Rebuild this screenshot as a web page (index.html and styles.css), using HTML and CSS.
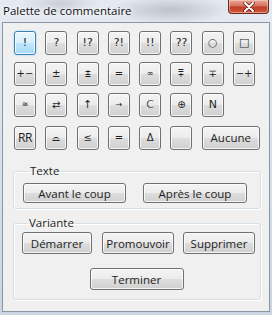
FILE: index.html
```html
<!DOCTYPE html>
<html lang="fr">
<head>
    <meta charset="UTF-8">
    <title>Palette de commentaire</title>
    <link rel="stylesheet" href="styles.css">
</head>
<body>
    <div class="window">
        <div class="titlebar">
            <span class="title">Palette de commentaire</span>
            <div class="close">
                <svg width="14" height="10" viewBox="0 0 14 10">
                    <path d="M3 1 L11 9 M11 1 L3 9" stroke="#5a1a10" stroke-width="3.4" stroke-linecap="round"/>
                    <path d="M3 1 L11 9 M11 1 L3 9" stroke="#ffffff" stroke-width="2" stroke-linecap="round"/>
                </svg>
            </div>
        </div>

        <div class="client">
            <div class="symbols">
                <button class="sym focused">!</button>
                <button class="sym">?</button>
                <button class="sym">!?</button>
                <button class="sym">?!</button>
                <button class="sym">!!</button>
                <button class="sym">??</button>
                <button class="sym light">○</button>
                <button class="sym">□</button>

                <button class="sym small">+−</button>
                <button class="sym small">±</button>
                <button class="sym small">⩲</button>
                <button class="sym small">=</button>
                <button class="sym tiny">∞</button>
                <button class="sym small">⩱</button>
                <button class="sym small">∓</button>
                <button class="sym small">−+</button>

                <button class="sym tiny">≅</button>
                <button class="sym small">⇄</button>
                <button class="sym">↑</button>
                <button class="sym tiny">→</button>
                <button class="sym light">C</button>
                <button class="sym small">⊕</button>
                <button class="sym">N</button>

                <button class="sym last rr">RR</button>
                <button class="sym last small">⌓</button>
                <button class="sym last small">≤</button>
                <button class="sym last small">=</button>
                <button class="sym last small">Δ</button>
                <button class="sym last"></button>
                <button class="sym last wide">Aucune</button>
            </div>

            <fieldset class="group">
                <legend>Texte</legend>
                <div class="row texte">
                    <button class="btn avant">Avant le coup</button>
                    <button class="btn apres">Après le coup</button>
                </div>
            </fieldset>

            <fieldset class="group variante">
                <legend>Variante</legend>
                <div class="row">
                    <button class="btn demarrer">Démarrer</button>
                    <button class="btn promouvoir">Promouvoir</button>
                    <button class="btn supprimer">Supprimer</button>
                </div>
                <div class="row center">
                    <button class="btn terminer">Terminer</button>
                </div>
            </fieldset>
        </div>
    </div>
</body>
</html>
```

FILE: styles.css
```css
html, body {
    margin: 0;
    padding: 0;
}
body {
    width: 272px;
    height: 315px;
    overflow: hidden;
    font-family: "Open Sans", "DejaVu Sans", sans-serif;
    font-size: 11.5px;
    color: #1e1e1e;
}
.window {
    width: 272px;
    height: 315px;
    box-sizing: border-box;
    padding: 0 2px 3px 2px;
    background:
        radial-gradient(ellipse 60px 14px at 170px 10px, rgba(120,120,130,0.35), transparent),
        radial-gradient(ellipse 40px 12px at 60px 4px, rgba(150,140,150,0.3), transparent),
        linear-gradient(#e4eaf1, #d6dfe8 60%, #cad5e0);
}
.titlebar {
    height: 22px;
    display: flex;
    justify-content: space-between;
    align-items: flex-start;
}
.title {
    margin: 3px 0 0 1px;
    font-size: 11.5px;
    color: #111;
    text-shadow: 0 0 6px #fff, 0 0 3px #fff;
}
.close {
    width: 41px;
    height: 14px;
    margin-right: 1px;
    box-sizing: border-box;
    border: 1px solid #6b2a1f;
    border-top: none;
    border-radius: 0 0 4px 4px;
    background: linear-gradient(#e9a899, #d4735c 45%, #c13f26 55%, #d2583c);
    box-shadow: inset 0 0 0 1px rgba(255,220,210,0.5);
    display: flex;
    align-items: center;
    justify-content: center;
}
.client {
    height: 290px;
    box-sizing: border-box;
    border: 1px solid #8c96a0;
    background: #f0f0f0;
    padding: 8px 9px 0 10px;
}
.symbols {
    display: grid;
    grid-template-columns: repeat(8, 22px);
    column-gap: 9.3px;
    row-gap: 7px;
    margin-left: 1px;
}
button {
    font-family: "Open Sans", "DejaVu Sans", sans-serif;
    font-size: 11.5px;
    color: #1e1e1e;
    padding: 0;
    margin: 0;
    border: 1px solid #707070;
    border-radius: 3px;
    background: linear-gradient(#f4f4f4, #ececec 48%, #dddddd 52%, #d0d0d0);
    box-shadow: inset 0 0 0 1px rgba(255,255,255,0.75);
    cursor: default;
}
.sym {
    width: 22px;
    height: 24px;
    font-family: "DejaVu Sans", sans-serif;
    font-size: 11px;
    line-height: 20px;
    white-space: nowrap;
    overflow: visible;
}
.sym.small {
    font-size: 10px;
}
.sym.tiny {
    font-size: 8px;
}
.sym.light {
    color: #555;
}
.sym.rr {
    grid-column: 1;
    font-family: "Open Sans", sans-serif;
    font-size: 12px;
    letter-spacing: -0.5px;
}
.sym.last {
    margin-top: 2px;
}
.sym.wide {
    width: 58px;
    font-family: "Open Sans", sans-serif;
    font-size: 11.5px;
    grid-column: span 2;
}
.sym.focused {
    border-color: #3c7fb1;
    background: linear-gradient(#eaf6fd, #d9f0fc 48%, #bee6fd 52%, #a7d9f5);
    box-shadow: inset 0 0 0 1px rgba(255,255,255,0.8), 0 0 2px #8ecdf0;
}
.group {
    width: 248px;
    box-sizing: border-box;
    margin: 13px 0 0 0;
    padding: 4px 0 5px 9px;
    border: 1px solid #d5dfe5;
    border-radius: 3px;
    box-shadow: inset 1px 1px 0 #fff, 1px 1px 0 #fff;
}
legend {
    padding: 0 1px;
    margin-left: 6px;
    line-height: 16px;
    font-size: 11.5px;
}
.row {
    display: flex;
}
.row.center {
    justify-content: center;
    margin: 14px 0 0 -9px;
}
.btn {
    height: 22px;
}
.texte .btn {
    height: 20px;
}
.avant {
    width: 103px;
}
.apres {
    width: 104px;
    margin-left: 17px;
}
.variante {
    margin-top: 6px;
    padding: 1px 0 9px 8px;
}
.demarrer {
    width: 70px;
}
.promouvoir {
    width: 72px;
    margin-left: 10px;
}
.supprimer {
    width: 72px;
    margin-left: 9px;
}
.terminer {
    width: 94px;
}
```
